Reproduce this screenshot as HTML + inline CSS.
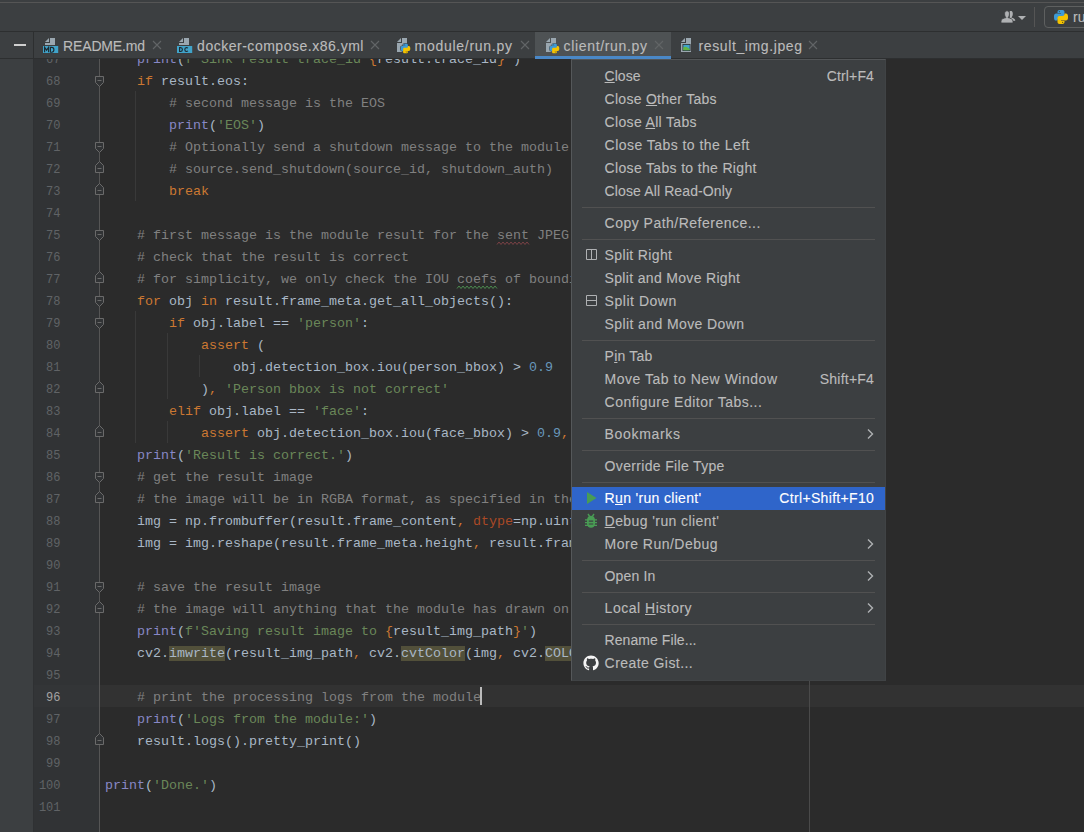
<!DOCTYPE html><html><head><meta charset="utf-8"><style>

html,body{margin:0;padding:0;width:1084px;height:832px;overflow:hidden;background:#3c3f41;}
.a{position:absolute;}
.t{position:absolute;white-space:pre;font-family:'Liberation Sans',sans-serif;line-height:20px;-webkit-text-stroke:0.12px currentColor;}
.c{position:absolute;left:105px;white-space:pre;font-family:'Liberation Mono',monospace;font-size:13.3333px;line-height:22px;height:22px;color:#a9b7c6;}
.ln{position:absolute;left:30px;width:30.5px;text-align:right;font-family:'Liberation Mono',monospace;font-size:12px;line-height:22px;color:#606366;}
.k{color:#cc7832}.s{color:#6a8759}.m{color:#808080}.b{color:#8888c6}.n{color:#6897bb}.p{color:#aa4926}
.hl{background:#52503a}

</style></head><body>
<div class="a" style="left:0;top:0;width:1084px;height:31px;background:#3c3f41"></div>
<div class="a" style="left:0;top:2px;width:1084px;height:1px;background:#555555"></div>
<div class="a" style="left:0;top:31px;width:1084px;height:1px;background:#2d2f30"></div>
<div class="a" style="left:0;top:32px;width:1084px;height:26px;background:#3c3f41"></div>
<div class="a" style="left:0;top:58px;width:1084px;height:1px;background:#2d2f30"></div>
<div class="a" style="left:33px;top:32px;width:1px;height:26px;background:#2d2f30"></div>
<div class="a" style="left:14px;top:44px;width:12px;height:2px;background:#cfcfcf"></div>
<div class="a" style="left:535px;top:32px;width:136px;height:24px;background:#4e5254"></div>
<div class="a" style="left:535px;top:56px;width:136px;height:3px;background:#4a88c7"></div>
<div class="a" style="left:0;top:59px;width:33px;height:773px;background:#3c3f41"></div>
<div class="a" style="left:33px;top:59px;width:1px;height:773px;background:#2f3133"></div>
<div class="a" style="left:34px;top:59px;width:66px;height:773px;background:#313335"></div>
<div class="a" style="left:100px;top:59px;width:984px;height:773px;background:#2b2b2b"></div>
<div class="a" style="left:34px;top:685px;width:66px;height:22px;background:#333537"></div>
<div class="a" style="left:100px;top:685px;width:984px;height:22px;background:#323232"></div>
<div class="a" style="left:809px;top:59px;width:1px;height:773px;background:#4a4a4a"></div>
<div class="a" style="left:99px;top:59px;width:1px;height:773px;background:#555555"></div>
<div class="a" style="left:0;top:59px;width:571px;height:773px;overflow:hidden"><div class="a" style="left:0;top:-59px;width:1084px;height:832px">
<div class="ln" style="top:49px;color:#606366">67</div>
<div class="c" style="top:49px">    <span class="b">print</span>(<span class="s">f'Sink result trace_id </span><span class="k">{</span>result.trace_id<span class="k">}</span><span class="s">'</span>)</div>
<div class="ln" style="top:71px;color:#606366">68</div>
<div class="c" style="top:71px">    <span class="k">if</span> result.eos:</div>
<div class="ln" style="top:93px;color:#606366">69</div>
<div class="c" style="top:93px">        <span class="m"># second message is the EOS</span></div>
<div class="ln" style="top:115px;color:#606366">70</div>
<div class="c" style="top:115px">        <span class="b">print</span>(<span class="s">'EOS'</span>)</div>
<div class="ln" style="top:137px;color:#606366">71</div>
<div class="c" style="top:137px">        <span class="m"># Optionally send a shutdown message to the module</span></div>
<div class="ln" style="top:159px;color:#606366">72</div>
<div class="c" style="top:159px">        <span class="m"># source.send_shutdown(source_id, shutdown_auth)</span></div>
<div class="ln" style="top:181px;color:#606366">73</div>
<div class="c" style="top:181px">        <span class="k">break</span></div>
<div class="ln" style="top:203px;color:#606366">74</div>
<div class="c" style="top:203px"></div>
<div class="ln" style="top:225px;color:#606366">75</div>
<div class="c" style="top:225px">    <span class="m"># first message is the module result for the sent JPEG image</span></div>
<div class="ln" style="top:247px;color:#606366">76</div>
<div class="c" style="top:247px">    <span class="m"># check that the result is correct</span></div>
<div class="ln" style="top:269px;color:#606366">77</div>
<div class="c" style="top:269px">    <span class="m"># for simplicity, we only check the IOU coefs of bounding boxes</span></div>
<div class="ln" style="top:291px;color:#606366">78</div>
<div class="c" style="top:291px">    <span class="k">for</span> obj <span class="k">in</span> result.frame_meta.get_all_objects():</div>
<div class="ln" style="top:313px;color:#606366">79</div>
<div class="c" style="top:313px">        <span class="k">if</span> obj.label == <span class="s">'person'</span>:</div>
<div class="ln" style="top:335px;color:#606366">80</div>
<div class="c" style="top:335px">            <span class="k">assert</span> (</div>
<div class="ln" style="top:357px;color:#606366">81</div>
<div class="c" style="top:357px">                obj.detection_box.iou(person_bbox) &gt; <span class="n">0.9</span></div>
<div class="ln" style="top:379px;color:#606366">82</div>
<div class="c" style="top:379px">            )<span class="k">,</span> <span class="s">'Person bbox is not correct'</span></div>
<div class="ln" style="top:401px;color:#606366">83</div>
<div class="c" style="top:401px">        <span class="k">elif</span> obj.label == <span class="s">'face'</span>:</div>
<div class="ln" style="top:423px;color:#606366">84</div>
<div class="c" style="top:423px">            <span class="k">assert</span> obj.detection_box.iou(face_bbox) &gt; <span class="n">0.9</span><span class="k">,</span> <span class="s">'Face bbox is not correct'</span></div>
<div class="ln" style="top:445px;color:#606366">85</div>
<div class="c" style="top:445px">    <span class="b">print</span>(<span class="s">'Result is correct.'</span>)</div>
<div class="ln" style="top:467px;color:#606366">86</div>
<div class="c" style="top:467px">    <span class="m"># get the result image</span></div>
<div class="ln" style="top:489px;color:#606366">87</div>
<div class="c" style="top:489px">    <span class="m"># the image will be in RGBA format, as specified in the module config</span></div>
<div class="ln" style="top:511px;color:#606366">88</div>
<div class="c" style="top:511px">    img = np.frombuffer(result.frame_content<span class="k">,</span> <span class="p">dtype</span>=np.uint8)</div>
<div class="ln" style="top:533px;color:#606366">89</div>
<div class="c" style="top:533px">    img = img.reshape(result.frame_meta.height<span class="k">,</span> result.frame_meta.width<span class="k">,</span> <span class="n">4</span>)</div>
<div class="ln" style="top:555px;color:#606366">90</div>
<div class="c" style="top:555px"></div>
<div class="ln" style="top:577px;color:#606366">91</div>
<div class="c" style="top:577px">    <span class="m"># save the result image</span></div>
<div class="ln" style="top:599px;color:#606366">92</div>
<div class="c" style="top:599px">    <span class="m"># the image will anything that the module has drawn on it</span></div>
<div class="ln" style="top:621px;color:#606366">93</div>
<div class="c" style="top:621px">    <span class="b">print</span>(<span class="s">f'Saving result image to </span><span class="k">{</span>result_img_path<span class="k">}</span><span class="s">'</span>)</div>
<div class="ln" style="top:643px;color:#606366">94</div>
<div class="c" style="top:643px">    cv2.<span class="hl">imwrite</span>(result_img_path<span class="k">,</span> cv2.<span class="hl">cvtColor</span>(img<span class="k">,</span> cv2.<span class="hl">COLOR_RGBA2BGRA</span>))</div>
<div class="ln" style="top:665px;color:#606366">95</div>
<div class="c" style="top:665px"></div>
<div class="ln" style="top:687px;color:#a4a3a3">96</div>
<div class="c" style="top:687px">    <span class="m"># print the processing logs from the module</span></div>
<div class="ln" style="top:709px;color:#606366">97</div>
<div class="c" style="top:709px">    <span class="b">print</span>(<span class="s">'Logs from the module:'</span>)</div>
<div class="ln" style="top:731px;color:#606366">98</div>
<div class="c" style="top:731px">    result.logs().pretty_print()</div>
<div class="ln" style="top:753px;color:#606366">99</div>
<div class="c" style="top:753px"></div>
<div class="ln" style="top:775px;color:#606366">100</div>
<div class="c" style="top:775px"><span class="b">print</span>(<span class="s">'Done.'</span>)</div>
<div class="ln" style="top:797px;color:#606366">101</div>
<div class="c" style="top:797px"></div>
</div></div>
<div class="a" style="left:135px;top:91px;width:1px;height:110px;background:#393939"></div>
<div class="a" style="left:135px;top:311px;width:1px;height:132px;background:#393939"></div>
<div class="a" style="left:167px;top:333px;width:1px;height:66px;background:#393939"></div>
<div class="a" style="left:167px;top:421px;width:1px;height:22px;background:#393939"></div>
<div class="a" style="left:199px;top:355px;width:1px;height:22px;background:#393939"></div>
<svg class="a" style="left:0;top:0" width="120" height="832" viewBox="0 0 120 832"><path d="M95.5 76.5 H103.5 V82.5 L99.5 86.5 L95.5 82.5 Z" fill="#313335" stroke="#6a6a6a" stroke-width="1"/><path d="M97.5 80.5 H101.5" stroke="#6a6a6a" stroke-width="1"/></svg>
<svg class="a" style="left:0;top:0" width="120" height="832" viewBox="0 0 120 832"><path d="M95.5 142.5 H103.5 V148.5 L99.5 152.5 L95.5 148.5 Z" fill="#313335" stroke="#6a6a6a" stroke-width="1"/><path d="M97.5 146.5 H101.5" stroke="#6a6a6a" stroke-width="1"/></svg>
<svg class="a" style="left:0;top:0" width="120" height="832" viewBox="0 0 120 832"><path d="M95.5 172.5 H103.5 V165.5 L99.5 161.5 L95.5 165.5 Z" fill="#313335" stroke="#6a6a6a" stroke-width="1"/><path d="M97.5 168.5 H101.5" stroke="#6a6a6a" stroke-width="1"/></svg>
<svg class="a" style="left:0;top:0" width="120" height="832" viewBox="0 0 120 832"><path d="M95.5 194.5 H103.5 V187.5 L99.5 183.5 L95.5 187.5 Z" fill="#313335" stroke="#6a6a6a" stroke-width="1"/><path d="M97.5 190.5 H101.5" stroke="#6a6a6a" stroke-width="1"/></svg>
<svg class="a" style="left:0;top:0" width="120" height="832" viewBox="0 0 120 832"><path d="M95.5 230.5 H103.5 V236.5 L99.5 240.5 L95.5 236.5 Z" fill="#313335" stroke="#6a6a6a" stroke-width="1"/><path d="M97.5 234.5 H101.5" stroke="#6a6a6a" stroke-width="1"/></svg>
<svg class="a" style="left:0;top:0" width="120" height="832" viewBox="0 0 120 832"><path d="M95.5 282.5 H103.5 V275.5 L99.5 271.5 L95.5 275.5 Z" fill="#313335" stroke="#6a6a6a" stroke-width="1"/><path d="M97.5 278.5 H101.5" stroke="#6a6a6a" stroke-width="1"/></svg>
<svg class="a" style="left:0;top:0" width="120" height="832" viewBox="0 0 120 832"><path d="M95.5 296.5 H103.5 V302.5 L99.5 306.5 L95.5 302.5 Z" fill="#313335" stroke="#6a6a6a" stroke-width="1"/><path d="M97.5 300.5 H101.5" stroke="#6a6a6a" stroke-width="1"/></svg>
<svg class="a" style="left:0;top:0" width="120" height="832" viewBox="0 0 120 832"><path d="M95.5 318.5 H103.5 V324.5 L99.5 328.5 L95.5 324.5 Z" fill="#313335" stroke="#6a6a6a" stroke-width="1"/><path d="M97.5 322.5 H101.5" stroke="#6a6a6a" stroke-width="1"/></svg>
<svg class="a" style="left:0;top:0" width="120" height="832" viewBox="0 0 120 832"><path d="M95.5 392.5 H103.5 V385.5 L99.5 381.5 L95.5 385.5 Z" fill="#313335" stroke="#6a6a6a" stroke-width="1"/><path d="M97.5 388.5 H101.5" stroke="#6a6a6a" stroke-width="1"/></svg>
<svg class="a" style="left:0;top:0" width="120" height="832" viewBox="0 0 120 832"><path d="M95.5 436.5 H103.5 V429.5 L99.5 425.5 L95.5 429.5 Z" fill="#313335" stroke="#6a6a6a" stroke-width="1"/><path d="M97.5 432.5 H101.5" stroke="#6a6a6a" stroke-width="1"/></svg>
<svg class="a" style="left:0;top:0" width="120" height="832" viewBox="0 0 120 832"><path d="M95.5 472.5 H103.5 V478.5 L99.5 482.5 L95.5 478.5 Z" fill="#313335" stroke="#6a6a6a" stroke-width="1"/><path d="M97.5 476.5 H101.5" stroke="#6a6a6a" stroke-width="1"/></svg>
<svg class="a" style="left:0;top:0" width="120" height="832" viewBox="0 0 120 832"><path d="M95.5 502.5 H103.5 V495.5 L99.5 491.5 L95.5 495.5 Z" fill="#313335" stroke="#6a6a6a" stroke-width="1"/><path d="M97.5 498.5 H101.5" stroke="#6a6a6a" stroke-width="1"/></svg>
<svg class="a" style="left:0;top:0" width="120" height="832" viewBox="0 0 120 832"><path d="M95.5 582.5 H103.5 V588.5 L99.5 592.5 L95.5 588.5 Z" fill="#313335" stroke="#6a6a6a" stroke-width="1"/><path d="M97.5 586.5 H101.5" stroke="#6a6a6a" stroke-width="1"/></svg>
<svg class="a" style="left:0;top:0" width="120" height="832" viewBox="0 0 120 832"><path d="M95.5 612.5 H103.5 V605.5 L99.5 601.5 L95.5 605.5 Z" fill="#313335" stroke="#6a6a6a" stroke-width="1"/><path d="M97.5 608.5 H101.5" stroke="#6a6a6a" stroke-width="1"/></svg>
<svg class="a" style="left:0;top:0" width="120" height="832" viewBox="0 0 120 832"><path d="M95.5 744.5 H103.5 V737.5 L99.5 733.5 L95.5 737.5 Z" fill="#313335" stroke="#6a6a6a" stroke-width="1"/><path d="M97.5 740.5 H101.5" stroke="#6a6a6a" stroke-width="1"/></svg>
<svg class="a" style="left:0;top:0" width="1084" height="832"><path d="M497 244.5 L499 242 L501 244.5 L503 242 L505 244.5 L507 242 L509 244.5 L511 242 L513 244.5 L515 242 L517 244.5 L519 242 L521 244.5 L523 242 L525 244.5 L527 242 L529 244.5" fill="none" stroke="#7b4246" stroke-width="1"/></svg>
<svg class="a" style="left:0;top:0" width="1084" height="832"><path d="M457 288.5 L459 286 L461 288.5 L463 286 L465 288.5 L467 286 L469 288.5 L471 286 L473 288.5 L475 286 L477 288.5 L479 286 L481 288.5 L483 286 L485 288.5 L487 286 L489 288.5 L491 286 L493 288.5 L495 286 L497 288.5" fill="none" stroke="#4b8a4f" stroke-width="1"/></svg>
<div class="a" style="left:480px;top:687px;width:2px;height:18px;background:#bbbbbb"></div>
<div class="a" style="left:571px;top:59px;width:315px;height:622px;background:#3c3f41;box-sizing:border-box;border:1px solid #404345;border-top-color:#525557;border-left-color:#55585a"></div>
<div class="a" style="left:582px;top:207px;width:293px;height:1px;background:#515151"></div>
<div class="a" style="left:582px;top:239px;width:293px;height:1px;background:#515151"></div>
<div class="a" style="left:582px;top:340px;width:293px;height:1px;background:#515151"></div>
<div class="a" style="left:582px;top:418px;width:293px;height:1px;background:#515151"></div>
<div class="a" style="left:582px;top:450px;width:293px;height:1px;background:#515151"></div>
<div class="a" style="left:582px;top:482px;width:293px;height:1px;background:#515151"></div>
<div class="a" style="left:572px;top:487px;width:313px;height:23px;background:#2f65ca"></div>
<div class="a" style="left:582px;top:560px;width:293px;height:1px;background:#515151"></div>
<div class="a" style="left:582px;top:592px;width:293px;height:1px;background:#515151"></div>
<div class="a" style="left:582px;top:624px;width:293px;height:1px;background:#515151"></div>
<svg class="a" style="left:42px;top:37px" width="18" height="18" viewBox="0 0 18 18"><path d="M8 1 H13 V8 H3 V6 H8 Z" fill="#9aa7b0"/><path d="M3 5 L7 1 V5 Z" fill="#9aa7b0"/><rect x="1" y="9" width="15.2" height="7" fill="#40a3c9"/><path d="M2.6 15.2 V10.4 L4.6 13.2 L6.6 10.4 V15.2 M8.4 10.4 V15.2 H9.8 C11 15.2 11.9 14.2 11.9 12.8 C11.9 11.4 11 10.4 9.8 10.4 Z" fill="none" stroke="#1e2a31" stroke-width="1.15"/></svg>
<svg class="a" style="left:176px;top:37px" width="18" height="18" viewBox="0 0 18 18"><path d="M8 1 H13 V8 H3 V6 H8 Z" fill="#9aa7b0"/><path d="M3 5 L7 1 V5 Z" fill="#9aa7b0"/><rect x="1" y="9" width="15.2" height="7" fill="#40a3c9"/><path d="M3.6 10.6 V14.5 H4.6 C5.8 14.5 6.4 13.6 6.4 12.55 C6.4 11.4 5.8 10.6 4.6 10.6 Z M11.9 11.2 C11.5 10.8 11 10.6 10.4 10.6 C9.4 10.6 8.8 11.5 8.8 12.55 C8.8 13.6 9.4 14.5 10.4 14.5 C11 14.5 11.5 14.3 11.9 13.9" fill="none" stroke="#1e2a31" stroke-width="1.15"/></svg>
<svg class="a" style="left:397px;top:38px" width="11" height="15" viewBox="0 0 11 15"><path d="M5 0 H10 V14 H0 V5 H5 Z" fill="#9aa7b0"/><path d="M0 4 L4 0 V4 Z" fill="#9aa7b0"/></svg>
<svg class="a" style="left:399.81px;top:42.91px" width="10.97" height="10.97" viewBox="-1 -1 16 16"><path d="M5.5 0 H8.5 C9.7 0 10.5 0.9 10.5 2 V6 C10.5 7.1 9.6 8 8.5 8 H5.6 C4.4 8 3.5 8.9 3.5 10 V10.6 H2.1 C0.9 10.6 0 9.6 0 7.4 V6.2 C0 4.4 0.9 3.5 2.1 3.5 H7 V2.9 H3.5 V2 C3.5 0.9 4.3 0 5.5 0 Z" fill="#3c3f41" stroke="#3c3f41" stroke-width="1.6"/><g transform="rotate(180 7 7)"><path d="M5.5 0 H8.5 C9.7 0 10.5 0.9 10.5 2 V6 C10.5 7.1 9.6 8 8.5 8 H5.6 C4.4 8 3.5 8.9 3.5 10 V10.6 H2.1 C0.9 10.6 0 9.6 0 7.4 V6.2 C0 4.4 0.9 3.5 2.1 3.5 H7 V2.9 H3.5 V2 C3.5 0.9 4.3 0 5.5 0 Z" fill="#3c3f41" stroke="#3c3f41" stroke-width="1.6"/></g><path d="M5.5 0 H8.5 C9.7 0 10.5 0.9 10.5 2 V6 C10.5 7.1 9.6 8 8.5 8 H5.6 C4.4 8 3.5 8.9 3.5 10 V10.6 H2.1 C0.9 10.6 0 9.6 0 7.4 V6.2 C0 4.4 0.9 3.5 2.1 3.5 H7 V2.9 H3.5 V2 C3.5 0.9 4.3 0 5.5 0 Z" fill="#3d9ad6"/><circle cx="5.4" cy="1.6" r="0.6" fill="#2b4a66"/><g transform="rotate(180 7 7)"><path d="M5.5 0 H8.5 C9.7 0 10.5 0.9 10.5 2 V6 C10.5 7.1 9.6 8 8.5 8 H5.6 C4.4 8 3.5 8.9 3.5 10 V10.6 H2.1 C0.9 10.6 0 9.6 0 7.4 V6.2 C0 4.4 0.9 3.5 2.1 3.5 H7 V2.9 H3.5 V2 C3.5 0.9 4.3 0 5.5 0 Z" fill="#f4c300"/><circle cx="5.4" cy="1.6" r="0.6" fill="#6b5a10"/></g></svg>
<svg class="a" style="left:546px;top:38px" width="11" height="15" viewBox="0 0 11 15"><path d="M5 0 H10 V14 H0 V5 H5 Z" fill="#9aa7b0"/><path d="M0 4 L4 0 V4 Z" fill="#9aa7b0"/></svg>
<svg class="a" style="left:548.81px;top:42.91px" width="10.97" height="10.97" viewBox="-1 -1 16 16"><path d="M5.5 0 H8.5 C9.7 0 10.5 0.9 10.5 2 V6 C10.5 7.1 9.6 8 8.5 8 H5.6 C4.4 8 3.5 8.9 3.5 10 V10.6 H2.1 C0.9 10.6 0 9.6 0 7.4 V6.2 C0 4.4 0.9 3.5 2.1 3.5 H7 V2.9 H3.5 V2 C3.5 0.9 4.3 0 5.5 0 Z" fill="#4e5254" stroke="#4e5254" stroke-width="1.6"/><g transform="rotate(180 7 7)"><path d="M5.5 0 H8.5 C9.7 0 10.5 0.9 10.5 2 V6 C10.5 7.1 9.6 8 8.5 8 H5.6 C4.4 8 3.5 8.9 3.5 10 V10.6 H2.1 C0.9 10.6 0 9.6 0 7.4 V6.2 C0 4.4 0.9 3.5 2.1 3.5 H7 V2.9 H3.5 V2 C3.5 0.9 4.3 0 5.5 0 Z" fill="#4e5254" stroke="#4e5254" stroke-width="1.6"/></g><path d="M5.5 0 H8.5 C9.7 0 10.5 0.9 10.5 2 V6 C10.5 7.1 9.6 8 8.5 8 H5.6 C4.4 8 3.5 8.9 3.5 10 V10.6 H2.1 C0.9 10.6 0 9.6 0 7.4 V6.2 C0 4.4 0.9 3.5 2.1 3.5 H7 V2.9 H3.5 V2 C3.5 0.9 4.3 0 5.5 0 Z" fill="#3d9ad6"/><circle cx="5.4" cy="1.6" r="0.6" fill="#2b4a66"/><g transform="rotate(180 7 7)"><path d="M5.5 0 H8.5 C9.7 0 10.5 0.9 10.5 2 V6 C10.5 7.1 9.6 8 8.5 8 H5.6 C4.4 8 3.5 8.9 3.5 10 V10.6 H2.1 C0.9 10.6 0 9.6 0 7.4 V6.2 C0 4.4 0.9 3.5 2.1 3.5 H7 V2.9 H3.5 V2 C3.5 0.9 4.3 0 5.5 0 Z" fill="#f4c300"/><circle cx="5.4" cy="1.6" r="0.6" fill="#6b5a10"/></g></svg>
<svg class="a" style="left:681px;top:38px" width="11" height="15" viewBox="0 0 11 15"><path d="M5 0 H10 V14 H0 V5 H5 Z" fill="#9aa7b0"/><path d="M0 4 L4 0 V4 Z" fill="#9aa7b0"/></svg>
<svg class="a" style="left:681px;top:38px" width="11" height="15" viewBox="0 0 11 15"><rect x="1.5" y="6" width="8" height="7" fill="#2d2f30"/><rect x="2.3" y="6.8" width="6.4" height="5.4" fill="#40a3c9"/><path d="M2.3 12.2 V9.6 C3.5 8.6 5 8.4 6.4 9.6 C7.2 10.2 8 10.8 8.7 11 V12.2 Z" fill="#62b543"/></svg>
<svg class="a" style="left:152px;top:40px" width="10" height="10" viewBox="0 0 10 10"><path d="M1 1 L9 9 M9 1 L1 9" stroke="#626567" stroke-width="1.1"/></svg>
<svg class="a" style="left:370px;top:40px" width="10" height="10" viewBox="0 0 10 10"><path d="M1 1 L9 9 M9 1 L1 9" stroke="#626567" stroke-width="1.1"/></svg>
<svg class="a" style="left:519.5px;top:40px" width="10" height="10" viewBox="0 0 10 10"><path d="M1 1 L9 9 M9 1 L1 9" stroke="#626567" stroke-width="1.1"/></svg>
<svg class="a" style="left:654px;top:40px" width="10" height="10" viewBox="0 0 10 10"><path d="M1 1 L9 9 M9 1 L1 9" stroke="#626567" stroke-width="1.1"/></svg>
<svg class="a" style="left:808px;top:40px" width="10" height="10" viewBox="0 0 10 10"><path d="M1 1 L9 9 M9 1 L1 9" stroke="#626567" stroke-width="1.1"/></svg>
<svg class="a" style="left:1000px;top:10px" width="28" height="14" viewBox="0 0 28 14"><path d="M9.6 1.4 C10.2 1 10.8 0.9 11.3 1 C12.3 1.2 12.8 2.4 12.8 3.8 C12.8 5.6 12.2 6.8 11.4 7.4 C13.4 8 14.8 8.8 15.2 10 V10.8 L12.8 11 C12.6 9.6 11.4 8.6 9.8 8 Z" fill="#afb1b3"/><path d="M7 0.8 C8.6 0.8 9.4 2.2 9.4 3.8 C9.4 5.6 8.8 7 8 7.6 C10.6 8.2 13 9.2 13 11 V13 H1 V11 C1 9.2 3.4 8.2 6 7.6 C5.2 7 4.6 5.6 4.6 3.8 C4.6 2.2 5.4 0.8 7 0.8 Z" fill="#afb1b3" stroke="#3c3f41" stroke-width="0.8"/><path d="M18 6 H26 L22 10 Z" fill="#afb1b3"/></svg>
<div class="a" style="left:1034px;top:7px;width:1px;height:20px;background:#555555"></div>
<div class="a" style="left:1044px;top:6px;width:60px;height:22px;box-sizing:border-box;border:1px solid #5e6060;border-radius:4px"></div>
<svg class="a" style="left:1053.00px;top:9.00px" width="16.00" height="16.00" viewBox="-1 -1 16 16"><path d="M5.5 0 H8.5 C9.7 0 10.5 0.9 10.5 2 V6 C10.5 7.1 9.6 8 8.5 8 H5.6 C4.4 8 3.5 8.9 3.5 10 V10.6 H2.1 C0.9 10.6 0 9.6 0 7.4 V6.2 C0 4.4 0.9 3.5 2.1 3.5 H7 V2.9 H3.5 V2 C3.5 0.9 4.3 0 5.5 0 Z" fill="#3d9ad6"/><circle cx="5.4" cy="1.6" r="0.6" fill="#2b4a66"/><g transform="rotate(180 7 7)"><path d="M5.5 0 H8.5 C9.7 0 10.5 0.9 10.5 2 V6 C10.5 7.1 9.6 8 8.5 8 H5.6 C4.4 8 3.5 8.9 3.5 10 V10.6 H2.1 C0.9 10.6 0 9.6 0 7.4 V6.2 C0 4.4 0.9 3.5 2.1 3.5 H7 V2.9 H3.5 V2 C3.5 0.9 4.3 0 5.5 0 Z" fill="#f4c300"/><circle cx="5.4" cy="1.6" r="0.6" fill="#6b5a10"/></g></svg>
<div class="t" style="left:1073px;top:7px;font-size:14px;color:#bbbbbb">run client</div>
<svg class="a" style="left:585px;top:248px" width="14" height="14" viewBox="0 0 14 14"><path d="M1.5 1.5 H11.5 V11.5 H1.5 Z M6.5 1.5 V11.5" fill="none" stroke="#afb1b3" stroke-width="1"/></svg>
<svg class="a" style="left:585px;top:294px" width="14" height="14" viewBox="0 0 14 14"><path d="M1.5 1.5 H11.5 V11.5 H1.5 Z M1.5 6.5 H11.5" fill="none" stroke="#afb1b3" stroke-width="1"/></svg>
<svg class="a" style="left:586px;top:491px" width="12" height="14" viewBox="0 0 12 14"><path d="M1 1 L10.5 7 L1 13 Z" fill="#499c54"/></svg>
<svg class="a" style="left:584px;top:513px" width="14" height="16" viewBox="0 0 14 16"><path d="M4 1 L5.6 3.4 M10 1 L8.4 3.4" stroke="#499c54" stroke-width="1.4"/><path d="M7 2.8 C9.6 2.8 11 4.6 11 7.4 V10.4 C11 13 9.4 14.8 7 14.8 C4.6 14.8 3 13 3 10.4 V7.4 C3 4.6 4.4 2.8 7 2.8 Z" fill="#499c54"/><path d="M1 6.8 H13 M1 9.6 H13 M1 12.4 H13" stroke="#499c54" stroke-width="1.3"/><path d="M4.8 8.2 H9.2 M4.8 11 H9.2" stroke="#3c3f41" stroke-width="1.2"/></svg>
<svg class="a" style="left:583px;top:655px" width="16" height="16" viewBox="0 0 16 16"><path fill="#f5f5f5" d="M8 0.4C3.8 0.4 0.4 3.8 0.4 8c0 3.4 2.2 6.2 5.2 7.2.4.1.5-.2.5-.4v-1.3c-2.1.5-2.6-1-2.6-1-.3-.9-.8-1.1-.8-1.1-.7-.5.1-.5.1-.5.8.1 1.2.8 1.2.8.7 1.2 1.8.8 2.2.6.1-.5.3-.8.5-1-1.7-.2-3.5-.8-3.5-3.8 0-.8.3-1.5.8-2.1-.1-.2-.3-1 .1-2.1 0 0 .6-.2 2.1.8.6-.2 1.3-.3 1.9-.3.6 0 1.3.1 1.9.3 1.5-1 2.1-.8 2.1-.8.4 1.1.2 1.9.1 2.1.5.6.8 1.3.8 2.1 0 3-1.8 3.6-3.5 3.8.3.2.5.7.5 1.4v2.1c0 .2.1.5.5.4 3-1 5.2-3.8 5.2-7.2C15.6 3.8 12.2 0.4 8 0.4z"/></svg>
<svg class="a" style="left:864px;top:426.5px" width="12" height="14" viewBox="0 0 12 14"><path d="M4 2.5 L8.5 7 L4 11.5" fill="none" stroke="#afb1b3" stroke-width="1.4"/></svg>
<svg class="a" style="left:864px;top:536.5px" width="12" height="14" viewBox="0 0 12 14"><path d="M4 2.5 L8.5 7 L4 11.5" fill="none" stroke="#afb1b3" stroke-width="1.4"/></svg>
<svg class="a" style="left:864px;top:568.5px" width="12" height="14" viewBox="0 0 12 14"><path d="M4 2.5 L8.5 7 L4 11.5" fill="none" stroke="#afb1b3" stroke-width="1.4"/></svg>
<svg class="a" style="left:864px;top:600.5px" width="12" height="14" viewBox="0 0 12 14"><path d="M4 2.5 L8.5 7 L4 11.5" fill="none" stroke="#afb1b3" stroke-width="1.4"/></svg>
<div class="t" style="left:63.10px;top:36px;font-size:14px;letter-spacing:-0.167px;color:#bbbbbb">README.md</div>
<div class="t" style="left:197.10px;top:36px;font-size:14px;letter-spacing:0.513px;color:#bbbbbb">docker-compose.x86.yml</div>
<div class="t" style="left:414.60px;top:36px;font-size:14px;letter-spacing:0.723px;color:#bbbbbb">module/run.py</div>
<div class="t" style="left:563.60px;top:36px;font-size:14px;letter-spacing:0.660px;color:#bbbbbb">client/run.py</div>
<div class="t" style="left:698.60px;top:36px;font-size:14px;letter-spacing:0.604px;color:#bbbbbb">result_img.jpeg</div>
<div class="t" style="left:604.60px;top:66px;font-size:14px;letter-spacing:0.026px;color:#bbbbbb"><u style="text-decoration-thickness:1px;text-underline-offset:1px">C</u>lose</div>
<div class="t" style="left:826.80px;top:66px;font-size:14px;letter-spacing:0.134px;color:#bbbbbb">Ctrl+F4</div>
<div class="t" style="left:604.60px;top:89px;font-size:14px;letter-spacing:0.273px;color:#bbbbbb">Close <u style="text-decoration-thickness:1px;text-underline-offset:1px">O</u>ther Tabs</div>
<div class="t" style="left:604.60px;top:112px;font-size:14px;letter-spacing:0.324px;color:#bbbbbb">Close <u style="text-decoration-thickness:1px;text-underline-offset:1px">A</u>ll Tabs</div>
<div class="t" style="left:604.60px;top:135px;font-size:14px;letter-spacing:0.458px;color:#bbbbbb">Close Tabs to the Left</div>
<div class="t" style="left:604.60px;top:158px;font-size:14px;letter-spacing:0.332px;color:#bbbbbb">Close Tabs to the Right</div>
<div class="t" style="left:604.60px;top:181px;font-size:14px;letter-spacing:0.118px;color:#bbbbbb">Close All Read-Only</div>
<div class="t" style="left:604.60px;top:213px;font-size:14px;letter-spacing:0.489px;color:#bbbbbb">Copy Path/Reference...</div>
<div class="t" style="left:604.60px;top:245px;font-size:14px;letter-spacing:0.359px;color:#bbbbbb">Split Right</div>
<div class="t" style="left:604.60px;top:268px;font-size:14px;letter-spacing:0.327px;color:#bbbbbb">Split and Move Right</div>
<div class="t" style="left:604.60px;top:291px;font-size:14px;letter-spacing:0.531px;color:#bbbbbb">Split Down</div>
<div class="t" style="left:604.60px;top:314px;font-size:14px;letter-spacing:0.395px;color:#bbbbbb">Split and Move Down</div>
<div class="t" style="left:604.60px;top:346px;font-size:14px;letter-spacing:0.191px;color:#bbbbbb">P<u style="text-decoration-thickness:1px;text-underline-offset:1px">i</u>n Tab</div>
<div class="t" style="left:604.60px;top:369px;font-size:14px;letter-spacing:0.515px;color:#bbbbbb">Move Tab to New Window</div>
<div class="t" style="left:819.80px;top:369px;font-size:14px;letter-spacing:0.224px;color:#bbbbbb">Shift+F4</div>
<div class="t" style="left:604.60px;top:392px;font-size:14px;letter-spacing:0.489px;color:#bbbbbb">Configure Editor Tabs...</div>
<div class="t" style="left:604.60px;top:424px;font-size:14px;letter-spacing:0.671px;color:#bbbbbb">Bookmarks</div>
<div class="t" style="left:604.60px;top:456px;font-size:14px;letter-spacing:0.334px;color:#bbbbbb">Override File Type</div>
<div class="t" style="left:604.60px;top:488px;font-size:14px;letter-spacing:0.324px;color:#ffffff">R<u style="text-decoration-thickness:1px;text-underline-offset:1px">u</u>n &#x27;run client&#x27;</div>
<div class="t" style="left:779.30px;top:488px;font-size:14px;letter-spacing:0.333px;color:#ffffff">Ctrl+Shift+F10</div>
<div class="t" style="left:604.60px;top:511px;font-size:14px;letter-spacing:0.412px;color:#bbbbbb"><u style="text-decoration-thickness:1px;text-underline-offset:1px">D</u>ebug &#x27;run client&#x27;</div>
<div class="t" style="left:604.60px;top:534px;font-size:14px;letter-spacing:0.490px;color:#bbbbbb">More Run/Debug</div>
<div class="t" style="left:604.60px;top:566px;font-size:14px;letter-spacing:0.129px;color:#bbbbbb">Open In</div>
<div class="t" style="left:604.60px;top:598px;font-size:14px;letter-spacing:0.507px;color:#bbbbbb">Local <u style="text-decoration-thickness:1px;text-underline-offset:1px">H</u>istory</div>
<div class="t" style="left:604.60px;top:630px;font-size:14px;letter-spacing:0.066px;color:#bbbbbb">Rename File...</div>
<div class="t" style="left:604.60px;top:653px;font-size:14px;letter-spacing:0.433px;color:#bbbbbb">Create Gist...</div>
</body></html>
